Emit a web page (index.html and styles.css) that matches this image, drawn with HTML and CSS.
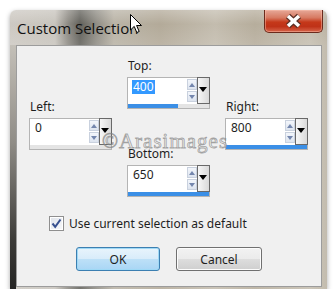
FILE: index.html
```html
<!DOCTYPE html>
<html>

<head>
  <title>Custom Selection</title>
  <link rel="stylesheet" href="styles.css">
</head>

<body>
  <div class="window">
    <div class="titlebar">
      <span class="title">Custom Selection</span>
      <button class="close" aria-label="Close">
        <svg width="19" height="16" viewBox="0 0 19 16">
          <path d="M4 3 L15 13 M15 3 L4 13" stroke="#5a3026" stroke-width="6" fill="none"/>
          <path d="M4 3 L15 13 M15 3 L4 13" stroke="#fff" stroke-width="3.6" fill="none"/>
        </svg>
      </button>
    </div>

    <div class="panel">
      <div class="fields">
        <div class="group g-top">
          <label>Top:</label>
          <div class="spin">
            <div class="edit"><span class="value selected">400</span>
              <div class="arrows"><span class="up"></span><span class="down"></span></div>
            </div>
            <div class="drop"></div>
            <div class="bar"><div class="fill" style="width: 62%"></div></div>
          </div>
        </div>

        <div class="group g-left">
          <label>Left:</label>
          <div class="spin">
            <div class="edit"><span class="value">0</span>
              <div class="arrows"><span class="up"></span><span class="down"></span></div>
            </div>
            <div class="drop"></div>
            <div class="bar"><div class="fill" style="width: 0%"></div></div>
          </div>
        </div>

        <div class="group g-right">
          <label>Right:</label>
          <div class="spin">
            <div class="edit"><span class="value">800</span>
              <div class="arrows"><span class="up"></span><span class="down"></span></div>
            </div>
            <div class="drop"></div>
            <div class="bar"><div class="fill" style="width: 100%"></div></div>
          </div>
        </div>

        <div class="group g-bottom">
          <label>Bottom:</label>
          <div class="spin">
            <div class="edit"><span class="value">650</span>
              <div class="arrows"><span class="up"></span><span class="down"></span></div>
            </div>
            <div class="drop"></div>
            <div class="bar"><div class="fill" style="width: 100%"></div></div>
          </div>
        </div>
      </div>

      <div class="check-row">
        <span class="checkbox">
          <svg width="11" height="11" viewBox="0 0 11 11">
            <path d="M1.5 5.5 L4.2 8.8 L9.5 1.5" stroke="#37508f" stroke-width="2" fill="none"/>
          </svg>
        </span>
        <span>Use current selection as default</span>
      </div>

      <div class="buttons">
        <button class="btn ok">OK</button>
        <button class="btn cancel">Cancel</button>
      </div>
    </div>

    <div class="watermark">©Arasimages</div>
  </div>

  <svg class="cursor" width="13" height="20" viewBox="0 0 13 20">
    <path d="M0.5 0.5 L0.5 16 L4.2 12.4 L6.8 18.5 L9.2 17.5 L6.6 11.5 L11.5 11.5 Z" fill="#fff" stroke="#000" stroke-width="1"/>
  </svg>
</body>

</html>
```

FILE: styles.css
```css
body {
  margin: 0;
  background: #ffffff;
  font-family: "Noto Sans", "Open Sans", sans-serif;
  font-size: 12px;
  color: #1e1e1e;
}

.window {
  position: relative;
  margin: 10px 0 0 10px;
  width: 317px;
  height: 279px;
  box-sizing: border-box;
  border-radius: 6px 6px 0 0;
  padding: 0 5px 2px 6px;
  display: flex;
  flex-direction: column;
  box-shadow: 0 2px 5px rgba(0, 0, 0, 0.35);
  background:
    linear-gradient(#c4c0b8, #8f8c86 35%, #3c3b38 70%, #141414) 0 35px / 6px 100% no-repeat,
    linear-gradient(rgba(255, 255, 255, 0.25), rgba(255, 255, 255, 0) 14px, rgba(255, 255, 255, 0.12) 35px),
    linear-gradient(90deg, #cdc9c2 0, #c8c4bd 45px, #8e8b84 58px, #62615b 70px, #8f8c84 86px, #b9b3a6 104px, #b3aa99 150px, #c3bcae 205px, #b6ad9c 245px, #c5beb0 300px, #bbb3a3 317px);
}

.titlebar {
  height: 35px;
  display: flex;
  justify-content: space-between;
  align-items: flex-start;
  flex-shrink: 0;
}

.title {
  font-family: "Open Sans", "Noto Sans", sans-serif;
  font-size: 15px;
  line-height: 18px;
  padding: 9px 0 0 1px;
  color: #111;
}

.close {
  width: 59px;
  height: 23px;
  margin-right: -1px;
  padding: 0;
  border: 1px solid #6b2a1c;
  border-top: none;
  border-radius: 0 0 5px 5px;
  background: linear-gradient(#e6a898 0, #d77a62 35%, #c5381a 55%, #bf3218 75%, #d6654b 100%);
  box-shadow: inset 0 0 0 1px rgba(255, 200, 180, 0.45);
  display: flex;
  align-items: center;
  justify-content: center;
}

.close svg {
  display: block;
}

.panel {
  flex: 1;
  background: #f0f0f0;
  border: 1px solid #9c9c9c;
}

.fields {
  display: grid;
  grid-template-columns: repeat(3, 83px);
  grid-template-rows: 41px 47px 50px;
  column-gap: 15px;
  padding: 13px 0 0 12px;
}

.g-top { grid-column: 2; grid-row: 1; }
.g-left { grid-column: 1; grid-row: 2; }
.g-right { grid-column: 3; grid-row: 2; }
.g-bottom { grid-column: 2; grid-row: 3; }

.group label {
  display: block;
  line-height: 14px;
  padding-left: 1px;
}

.spin {
  margin-top: 4px;
  width: 83px;
  height: 32px;
  box-sizing: border-box;
  border: 1px solid #b4b4b4;
  background: #ffffff;
  display: grid;
  grid-template-columns: 1fr 12px;
  grid-template-rows: 1fr 4px;
}

.edit {
  display: flex;
  justify-content: space-between;
}

.value {
  align-self: flex-start;
  margin: 2px 0 0 4px;
  line-height: 14px;
  padding: 0 1px;
}

.value.selected {
  background: #3399ff;
  color: #ffffff;
}

.arrows {
  width: 10px;
  display: flex;
  flex-direction: column;
  gap: 1px;
  padding: 1px 0 2px;
}

.arrows span {
  flex: 1;
  position: relative;
  border: 1px solid #c9d1de;
  background: linear-gradient(#f3f6fb, #dde4ef);
}

.arrows span::after {
  content: "";
  position: absolute;
  left: 1px;
  top: 3px;
  border-left: 3px solid transparent;
  border-right: 3px solid transparent;
}

.arrows .up::after {
  border-bottom: 4px solid #7486ad;
}

.arrows .down::after {
  border-top: 4px solid #7486ad;
}

.drop {
  position: relative;
  margin: -1px -1px 0 0;
  border: 1px solid #696969;
  background: linear-gradient(90deg, #f7f7f7, #d9d9d9);
}

.drop::after {
  content: "";
  position: absolute;
  left: 1px;
  top: 9px;
  border-left: 4px solid transparent;
  border-right: 4px solid transparent;
  border-top: 5px solid #000;
}

.bar {
  grid-column: 1 / -1;
  background: #e4e4e4;
}

.fill {
  height: 100%;
  background: #3b8fe6;
}

.check-row {
  margin-top: 18px;
  padding-left: 32px;
  height: 16px;
  display: flex;
  align-items: center;
  gap: 5px;
}

.checkbox {
  width: 15px;
  height: 15px;
  box-sizing: border-box;
  border: 1px solid #8f8f8f;
  background: linear-gradient(135deg, #dfe3ea, #f8f9fb);
  box-shadow: inset 0 0 0 1px #ffffff;
  display: flex;
  align-items: center;
  justify-content: center;
}

.buttons {
  margin-top: 16px;
  display: flex;
  justify-content: center;
  gap: 16px;
}

.btn {
  height: 24px;
  font-family: inherit;
  font-size: 12px;
  color: #1e1e1e;
  border-radius: 3px;
  padding: 0;
}

.ok {
  width: 84px;
  border: 1px solid #3c7fb1;
  background: linear-gradient(#e8f4fc 0, #d8ecfa 50%, #bde0f7 51%, #a9d6f5 100%);
  box-shadow: inset 0 0 0 1px #9fd9f6;
}

.cancel {
  width: 86px;
  border: 1px solid #707070;
  background: linear-gradient(#f2f2f2 0, #ebebeb 50%, #dddddd 51%, #cfcfcf 100%);
  box-shadow: inset 0 0 0 1px #fcfcfc;
}

.watermark {
  position: absolute;
  left: 92px;
  top: 119px;
  font-family: "Liberation Serif", serif;
  font-size: 21px;
  line-height: 24px;
  letter-spacing: 1px;
  color: rgba(235, 235, 235, 0.5);
  -webkit-text-stroke: 0.8px rgba(110, 110, 110, 0.6);
  pointer-events: none;
}

.cursor {
  position: absolute;
  left: 130px;
  top: 14px;
}
```
